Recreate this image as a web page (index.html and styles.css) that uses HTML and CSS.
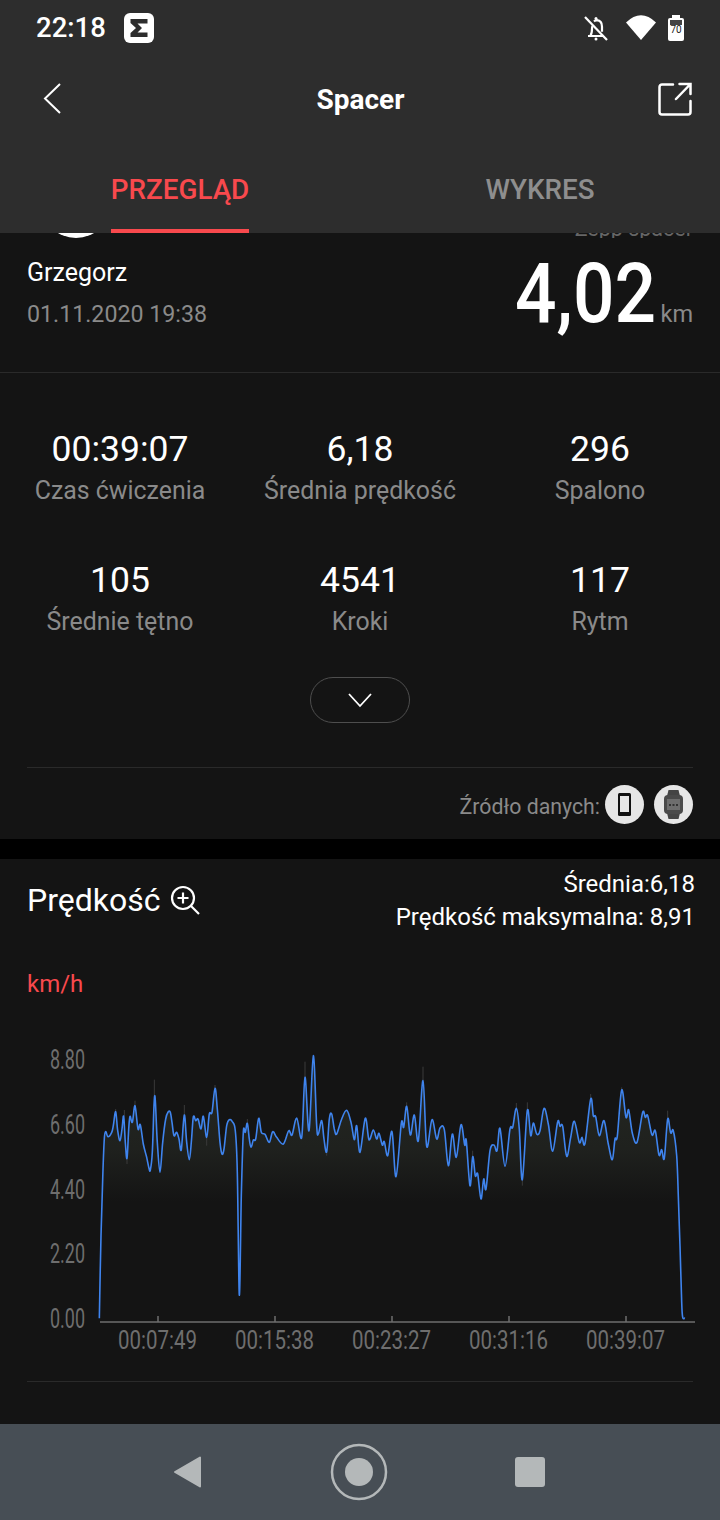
FILE: index.html
```html
<!DOCTYPE html>
<html lang="pl">
<head>
    <meta charset="UTF-8">
    <meta name="viewport" content="width=device-width, initial-scale=1.0">
    <title>Spacer</title>
    <link rel="stylesheet" href="styles.css">
</head>
<body>
    <div class="header">
        <div class="status-bar">
            <span class="clock">22:18</span>
            <svg class="app-icon" width="30" height="30" viewBox="0 0 30 30">
                <rect width="30" height="30" rx="6" fill="#fff"/>
                <path d="M6.500 6h17v4.500H13.500l4.500 4.500-4.500 4.500h10V24h-17v-4l5.500-5-5.500-5z" fill="#2d2d2d"/>
            </svg>
            <div class="status-icons">
                <svg class="bell" width="28" height="28" viewBox="0 0 28 28" fill="none" stroke="#fff" stroke-width="2.200">
                    <path d="M6 22h15M8.500 21.500c1.500-2 1.500-4 1.500-7 0-1 .2-1.800.5-2.500M12 7.500c1-1 2-1.300 3-1.300 3.500.3 5 3 5 6.500v5"/>
                    <path d="M3 3l22 23"/>
                    <circle cx="14" cy="4.500" r="1.500" fill="#fff" stroke="none"/>
                    <circle cx="14" cy="25" r="1.500" fill="#fff" stroke="none"/>
                </svg>
                <svg width="30" height="25" viewBox="0 0 30 25"><path d="M0 7.500Q15-7 30 7.500L15 25z" fill="#fff"/></svg>
                <div class="battery"><span class="battery-level">70</span></div>
            </div>
        </div>
        <div class="toolbar">
            <svg width="20" height="32" viewBox="0 0 20 32" fill="none" stroke="#fff" stroke-width="2"><path d="M17 1L2 15.500 17 30"/></svg>
            <h1>Spacer</h1>
            <svg width="34" height="34" viewBox="0 0 34 34" fill="none" stroke="#fff" stroke-width="2.500" stroke-linecap="round">
                <path d="M15 2.500H4a2.500 2.500 0 0 0-2.500 2.500v25A2.500 2.500 0 0 0 4 32.500h26a2.500 2.500 0 0 0 2.500-2.500V19"/>
                <path d="M18 17L32.500 2M21.500 2h11v10"/>
            </svg>
        </div>
        <div class="tabs">
            <div class="tab active"><span>PRZEGLĄD</span></div>
            <div class="tab"><span>WYKRES</span></div>
        </div>
    </div>

    <div class="content">
        <div class="summary">
            <div class="clipped-row">
                <div class="avatar"></div>
                <span class="device-name">Zepp spacer</span>
            </div>
            <div class="summary-row">
                <div>
                    <div class="user-name">Grzegorz</div>
                    <div class="workout-date">01.11.2020 19:38</div>
                </div>
                <div class="distance">
                    <span class="distance-value">4,02</span>
                    <span class="distance-unit">km</span>
                </div>
            </div>
        </div>

        <div class="stats-card">
            <div class="stats-grid">
                <div class="stat"><div class="stat-value">00:39:07</div><div class="stat-label">Czas ćwiczenia</div></div>
                <div class="stat"><div class="stat-value">6,18</div><div class="stat-label">Średnia prędkość</div></div>
                <div class="stat"><div class="stat-value">296</div><div class="stat-label">Spalono</div></div>
                <div class="stat"><div class="stat-value">105</div><div class="stat-label">Średnie tętno</div></div>
                <div class="stat"><div class="stat-value">4541</div><div class="stat-label">Kroki</div></div>
                <div class="stat"><div class="stat-value">117</div><div class="stat-label">Rytm</div></div>
            </div>
            <div class="expand-btn">
                <svg width="26" height="16" viewBox="0 0 26 16" fill="none" stroke="#fff" stroke-width="1.800"><path d="M2 2l11 12L24 2"/></svg>
            </div>
            <div class="source-row">
                <span>Źródło danych:</span>
                <div class="source-icon">
                    <svg width="13" height="23" viewBox="0 0 13 23"><rect width="13" height="23" rx="1.500" fill="#111"/><rect x="2" y="3" width="9" height="16" fill="#e6e6e6"/></svg>
                </div>
                <div class="source-icon">
                    <svg width="19" height="29" viewBox="0 0 19 29">
                        <path d="M3 6l1.500-6h10L16 6zM3 23l1.500 6h10L16 23z" fill="#444"/>
                        <rect x="0" y="5" width="19" height="19" rx="4" fill="#4a4a4a"/>
                        <rect x="3" y="9" width="13" height="11" fill="#6e6e6e"/>
                        <path d="M5 15h2M8.500 15h2M12 15h2" stroke="#333" stroke-width="2"/>
                    </svg>
                </div>
            </div>
        </div>

        <div class="speed-card">
            <div class="speed-head">
                <div class="speed-title">
                    <span>Prędkość</span>
                    <svg width="30" height="30" viewBox="0 0 30 30" fill="none" stroke="#fff" stroke-width="2.200">
                        <circle cx="13" cy="13" r="11"/>
                        <path d="M21 21l8 8M13 7.500v11M7.500 13h11"/>
                    </svg>
                </div>
                <div class="speed-summary">
                    <div>Średnia:6,18</div>
                    <div>Prędkość maksymalna: 8,91</div>
                </div>
            </div>
            <div class="speed-unit">km/h</div>
            <svg class="chart" width="720" height="330" viewBox="0 0 720 330">
                <defs>
                    <linearGradient id="areaFill" x1="0" y1="0" x2="0" y2="1">
                        <stop offset="0" stop-color="#262923"/>
                        <stop offset="0.35" stop-color="#1f211e"/>
                        <stop offset="0.55" stop-color="#141414"/>
                    </linearGradient>
                </defs>
                <path id="chartArea" fill="url(#areaFill)"/>
                <path id="chartRaw" fill="none" stroke="#3a3a3a" stroke-width="1"/>
                <path id="chartLine" fill="none" stroke="#3f84ee" stroke-width="1.600" stroke-linejoin="round"/>
                <path class="axis" d="M100 293h595M158 293v-6M275 293v-6M392 293v-6M509 293v-6M626 293v-6"/>
                <g class="y-labels">
                    <text x="50" y="40" textLength="35" lengthAdjust="spacingAndGlyphs">8.80</text>
                    <text x="50" y="105" textLength="35" lengthAdjust="spacingAndGlyphs">6.60</text>
                    <text x="50" y="170" textLength="35" lengthAdjust="spacingAndGlyphs">4.40</text>
                    <text x="50" y="234" textLength="35" lengthAdjust="spacingAndGlyphs">2.20</text>
                    <text x="50" y="299" textLength="35" lengthAdjust="spacingAndGlyphs">0.00</text>
                </g>
                <g class="x-labels">
                    <text x="118" y="320" textLength="79" lengthAdjust="spacingAndGlyphs">00:07:49</text>
                    <text x="235" y="320" textLength="79" lengthAdjust="spacingAndGlyphs">00:15:38</text>
                    <text x="352" y="320" textLength="79" lengthAdjust="spacingAndGlyphs">00:23:27</text>
                    <text x="469" y="320" textLength="79" lengthAdjust="spacingAndGlyphs">00:31:16</text>
                    <text x="586" y="320" textLength="79" lengthAdjust="spacingAndGlyphs">00:39:07</text>
                </g>
            </svg>
            <div class="speed-divider"></div>
        </div>
    </div>

    <div class="nav-bar">
        <svg width="30" height="34" viewBox="0 0 30 34"><path d="M27 2.500v29L2 17z" fill="#b4b8b9" stroke="#b4b8b9" stroke-width="2" stroke-linejoin="round"/></svg>
        <svg width="58" height="58" viewBox="0 0 58 58"><circle cx="29" cy="29" r="27" fill="none" stroke="#b4b8b9" stroke-width="2.500"/><circle cx="29" cy="29" r="14" fill="#b4b8b9"/></svg>
        <div class="nav-square"></div>
    </div>

    <script src="chart.js"></script>
</body>
</html>
```

FILE: styles.css
```css
* {
    margin: 0;
    padding: 0;
    box-sizing: border-box;
}

body {
    width: 720px;
    height: 1520px;
    overflow: hidden;
    font-family: Roboto, 'Noto Sans', sans-serif;
    background: #000;
    color: #fff;
    display: flex;
    flex-direction: column;
}

.header {
    height: 233px;
    flex: none;
    background: #2d2d2d;
}

.status-bar {
    height: 55px;
    padding: 0 36px 0 36px;
    display: flex;
    align-items: center;
}

.clock {
    font-size: 27.500px;
    font-weight: 500;
    margin-right: 18px;
}

.status-icons {
    margin-left: auto;
    display: flex;
    align-items: center;
    gap: 12px;
}

.bell {
    margin-right: 4px;
}

.battery {
    width: 16px;
    height: 23px;
    margin-top: 3px;
    background: #fff;
    border-radius: 2px;
    position: relative;
}

.battery::before {
    content: "";
    position: absolute;
    left: 4px;
    top: -3px;
    width: 8px;
    height: 3px;
    background: #fff;
}

.battery::after {
    content: "";
    position: absolute;
    left: 2px;
    top: 2px;
    width: 12px;
    height: 5px;
    background: #444;
}

.battery-level {
    display: block;
    padding-top: 7px;
    font-size: 10px;
    line-height: 10px;
    text-align: center;
    color: #222;
}

.toolbar {
    height: 87px;
    padding: 0 28px 0 43px;
    display: flex;
    align-items: center;
    justify-content: space-between;
}

.toolbar h1 {
    font-size: 28px;
    font-weight: 700;
    padding-top: 2px;
}

.tabs {
    height: 91px;
    display: flex;
}

.tab {
    flex: 1;
    display: flex;
    justify-content: center;
    font-size: 27.800px;
    font-weight: 500;
    color: #8e8e8e;
}

.tab span {
    padding-top: 29px;
    line-height: 38px;
}

.tab.active {
    color: #f8494d;
}

.tab.active span {
    border-bottom: 4px solid #f8494d;
}

.content {
    flex: 1;
    min-height: 0;
    overflow: hidden;
}

.summary {
    height: 140px;
    background: #141414;
    border-bottom: 1px solid #2a2a2a;
    padding: 0 27px;
}

.clipped-row {
    height: 5px;
    overflow: hidden;
    display: flex;
    align-items: flex-end;
    justify-content: space-between;
}

.avatar {
    width: 70px;
    height: 70px;
    margin-left: 14px;
    border-radius: 50%;
    background: #fff;
    flex: none;
}

.device-name {
    font-size: 21.500px;
    line-height: 18px;
    color: #666;
}

.summary-row {
    display: flex;
    justify-content: space-between;
    padding-top: 20px;
}

.user-name {
    font-size: 25px;
    line-height: 30px;
}

.workout-date {
    font-size: 23.200px;
    line-height: 30px;
    margin-top: 11px;
    color: #8a8a8a;
}

.distance {
    display: flex;
    align-items: baseline;
    height: 90px;
    margin-top: -9px;
}

.distance-value {
    display: inline-block;
    font-size: 84px;
    font-weight: 500;
    line-height: 90px;
    transform: scaleX(0.87);
    transform-origin: right;
}

.distance-unit {
    font-size: 23.500px;
    color: #8a8a8a;
    margin-left: 4px;
}

.stats-card {
    background: #141414;
    height: 466px;
    padding-top: 56px;
}

.stats-grid {
    display: grid;
    grid-template-columns: repeat(3, 240px);
    row-gap: 49px;
    text-align: center;
}

.stat-value {
    font-size: 35.500px;
    line-height: 40px;
}

.stat-label {
    font-size: 24.900px;
    line-height: 40px;
    margin-top: 2px;
    color: #8a8a8a;
}

.expand-btn {
    width: 100px;
    height: 46px;
    margin: 35px auto 0;
    border: 1.500px solid #4e4e4e;
    border-radius: 23px;
    display: flex;
    align-items: center;
    justify-content: center;
}

.source-row {
    margin: 44px 27px 0;
    padding-top: 17px;
    border-top: 1px solid #2a2a2a;
    display: flex;
    justify-content: flex-end;
    align-items: center;
    font-size: 21.300px;
    color: #8a8a8a;
}

.source-row span {
    margin-top: 4px;
}

.source-icon {
    width: 39px;
    height: 39px;
    margin-left: 10px;
    border-radius: 50%;
    background: #e6e6e6;
    display: flex;
    align-items: center;
    justify-content: center;
}

.source-row span + .source-icon {
    margin-left: 5px;
}

.speed-card {
    margin-top: 20px;
    height: 565px;
    background: #141414;
    padding-top: 9px;
}

.speed-head {
    padding: 0 25px 0 27px;
    display: flex;
    justify-content: space-between;
}

.speed-title {
    display: flex;
    align-items: center;
    gap: 10px;
    font-size: 32px;
    height: 64px;
}

.speed-summary {
    font-size: 24px;
    line-height: 33px;
    text-align: right;
}

.speed-unit {
    padding: 0 27px;
    margin-top: 35px;
    font-size: 24px;
    line-height: 30px;
    color: #f8494d;
}

.chart {
    display: block;
    margin-top: 30px;
}

.axis {
    fill: none;
    stroke: #6e6e6e;
    stroke-width: 1.500;
}

.y-labels text {
    font-size: 27px;
    fill: #6e6e6e;
}

.x-labels text {
    font-size: 25px;
    fill: #6e6e6e;
}

.speed-divider {
    margin: 22px 27px 0;
    border-top: 1px solid #2a2a2a;
}

.nav-bar {
    height: 96px;
    flex: none;
    background: #474e55;
    display: flex;
    align-items: center;
    padding: 0 175px 0 173px;
    justify-content: space-between;
}

.nav-square {
    width: 30px;
    height: 30px;
    border-radius: 3px;
    background: #b4b8b9;
}
```

FILE: chart.js
```js
// Punkty w jednostkach 1/3 px, od lewej krawedzi i gory wykresu
const left = [[298,868],[303,620],[308,450],[313,330],[317,308],[324,323],[335,310],[340,290],[347,248],[353,305],[360,335],[366,300],[371,262],[376,340],[381,388],[386,300],[390,262],[397,280],[405,230],[414,300],[421,287],[430,345],[440,385],[447,418],[451,423],[457,370],[464,200],[472,340],[480,430],[488,340],[497,270],[505,248],[511,250],[516,280],[522,320],[530,310],[537,330],[544,362],[553,258],[560,340],[568,392],[574,340],[580,264],[587,275],[594,270],[603,300],[610,262],[620,325],[628,255],[636,250],[645,178],[652,240],[660,340],[666,375],[672,360],[680,290],[688,272],[697,278],[706,305],[712,430],[718,798],[724,500],[730,310],[736,310],[742,283],[748,330],[753,355],[760,333],[767,330],[776,268],[784,310],[795,316],[808,340],[818,308],[830,325],[850,345],[866,305],[876,318],[890,267],[905,325],[915,145],[927,305],[940,80],[950,290],[955,315],[965,275],[972,330],[980,368],[988,270],[995,255],[1003,300],[1010,315],[1025,270],[1040,244],[1053,280],[1063,332],[1070,290]];
const right = [[0,370],[16,268],[27,332],[40,303],[50,330],[57,313],[67,348],[73,338],[83,380],[96,308],[108,443],[124,283],[131,295],[140,232],[151,318],[163,258],[175,335],[189,155],[200,352],[216,272],[230,330],[240,297],[253,302],[265,410],[277,315],[289,385],[303,287],[314,348],[319,335],[330,470],[338,383],[346,440],[353,435],[363,510],[371,450],[378,480],[390,365],[402,348],[411,365],[420,298],[435,412],[450,300],[458,295],[469,238],[478,300],[487,452],[502,245],[512,320],[520,282],[530,315],[540,305],[552,238],[565,285],[578,367],[593,278],[600,292],[608,292],[620,382],[632,325],[643,277],[658,340],[666,325],[675,343],[692,210],[700,260],[707,263],[718,320],[732,275],[745,345],[757,392],[765,330],[772,322],[785,183],[798,265],[806,243],[817,312],[831,340],[848,250],[856,265],[863,260],[876,318],[886,305],[897,378],[905,362],[913,388],[923,270],[932,312],[940,305],[950,380],[955,500],[960,650],[965,820],[968,865],[975,867]];

const points = left.concat(right.map(p => [p[0] + 1080, p[1]])).map(p => [p[0] / 3, p[1] / 3]);

// Cienkie piki surowych danych nad i pod linia
const raw = [[463,152,200],[553,228,258],[645,168,178],[915,98,145],[405,215,230],[373,243,262],[347,240,248],[742,270,283],[381,388,405],[620,325,350],[980,368,380],[1269,113,155],[1220,220,232],[1772,195,210],[2003,245,270],[1865,175,183],[1567,452,470],[1418,365,383],[1582,220,245],[1549,222,238]];

function smoothPath(pts) {
    let d = `M${pts[0][0]} ${pts[0][1]}`;
    for (let i = 0; i < pts.length - 1; i++) {
        const p0 = pts[Math.max(i - 1, 0)];
        const p1 = pts[i];
        const p2 = pts[i + 1];
        const p3 = pts[Math.min(i + 2, pts.length - 1)];
        const c1x = p1[0] + (p2[0] - p0[0]) / 6;
        const c1y = p1[1] + (p2[1] - p0[1]) / 6;
        const c2x = p2[0] - (p3[0] - p1[0]) / 6;
        const c2y = p2[1] - (p3[1] - p1[1]) / 6;
        d += `C${c1x.toFixed(1)} ${c1y.toFixed(1)} ${c2x.toFixed(1)} ${c2y.toFixed(1)} ${p2[0].toFixed(1)} ${p2[1].toFixed(1)}`;
    }
    return d;
}

const line = smoothPath(points);
document.getElementById('chartLine').setAttribute('d', line);
document.getElementById('chartArea').setAttribute('d', line + 'L325 292L100 292Z');
document.getElementById('chartRaw').setAttribute('d', raw.map(r => `M${r[0] / 3} ${r[1] / 3}V${r[2] / 3}`).join(''));
```
